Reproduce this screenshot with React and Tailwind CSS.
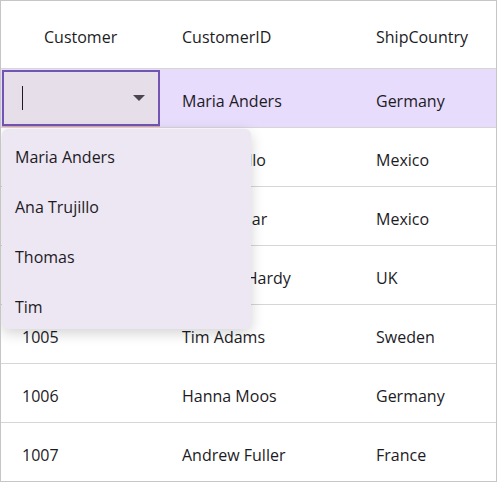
import React from "react";

const rows = [
  { id: "", name: "Maria Anders", country: "Germany", editing: true },
  { id: "1002", name: "Ana Trujillo", country: "Mexico" },
  { id: "1003", name: "Hari Kumar", country: "Mexico" },
  { id: "1004", name: "Thomas Hardy", country: "UK" },
  { id: "1005", name: "Tim Adams", country: "Sweden" },
  { id: "1006", name: "Hanna Moos", country: "Germany" },
  { id: "1007", name: "Andrew Fuller", country: "France" },
];

const options = ["Maria Anders", "Ana Trujillo", "Thomas", "Tim"];

const App = () => {
  return (
    <div className="w-[497px] h-[482px] bg-white border border-[#c6c6c6] text-[16px] text-[#1c1b1f] overflow-hidden relative" style={{ fontFamily: '"Segoe UI", "Open Sans", sans-serif' }}>
      <div className="flex h-[68px] items-center pt-[4px] border-b border-[#d6d6d6]">
        <div className="w-[159px] pl-[43px]">Customer</div>
        <div className="w-[194px] pl-[22px]">CustomerID</div>
        <div className="flex-1 pl-[22px]">ShipCountry</div>
      </div>
      {rows.map((row, i) =>
        row.editing ? (
          <div key={i} className="flex h-[59px] bg-[#e8dcfd] border-b border-[#d6d6d6]">
            <div className="w-[160px] pt-px px-px flex flex-col">
              <div className="flex-1 flex items-center justify-between border-2 border-[#7254b3] bg-[#e6dfea] pl-[18px] pr-[13px]">
                <span className="w-px h-[24px] bg-[#1c1b1f]" />
                <svg width="12" height="7" viewBox="0 0 12 7">
                  <path d="M0 0 L12 0 L6 6 Z" fill="#4a4650" />
                </svg>
              </div>
              <div className="h-px bg-[#e0a4ac]" />
            </div>
            <div className="w-[193px] pl-[21px] pt-[6px] flex items-center">{row.name}</div>
            <div className="flex-1 pl-[22px] pt-[6px] flex items-center">{row.country}</div>
          </div>
        ) : (
          <div key={i} className="flex h-[59px] items-center pt-[6px] border-b border-[#d6d6d6]">
            <div className="w-[160px] pl-[21px]">{row.id}</div>
            <div className="w-[193px] pl-[21px]">{row.name}</div>
            <div className="flex-1 pl-[22px]">{row.country}</div>
          </div>
        )
      )}
      <div className="absolute left-[1px] top-[128px] w-[249px] h-[200px] bg-[#ede6f3] rounded-[6px] shadow-[0_4px_14px_rgba(0,0,0,0.18)] flex flex-col">
        {options.map((o) => (
          <div key={o} className="h-[50px] flex items-center pt-[6px] pl-[13px]">{o}</div>
        ))}
      </div>
    </div>
  );
};

export default App;
